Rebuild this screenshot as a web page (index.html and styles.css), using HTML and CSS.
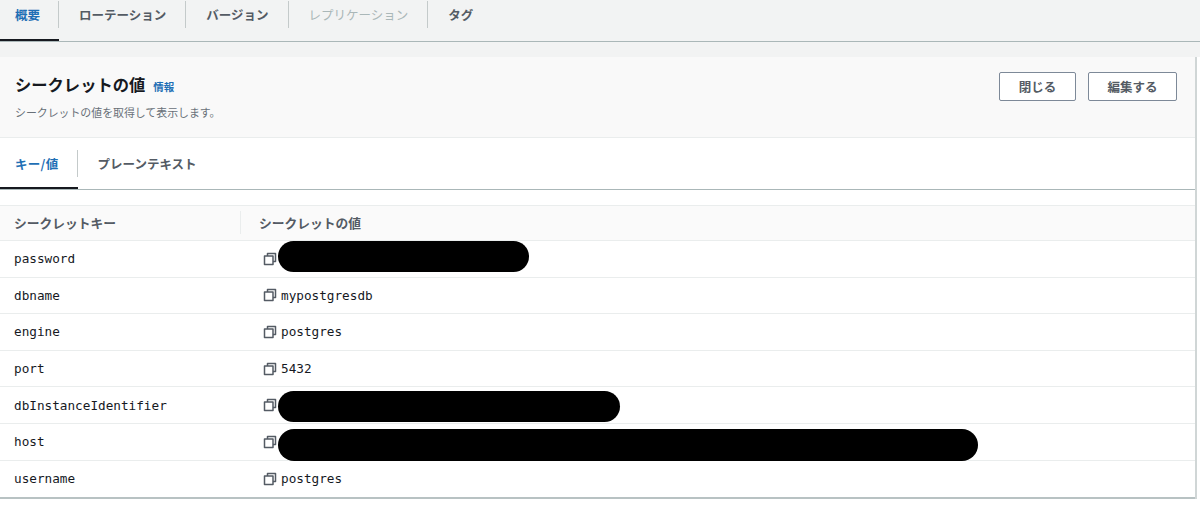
FILE: index.html
```html
<!DOCTYPE html>
<html lang="ja">
<head>
<meta charset="utf-8">
<title>シークレットの値</title>
<link rel="stylesheet" href="styles.css">
</head>
<body>
<svg class="defs" width="0" height="0" aria-hidden="true"><symbol id="copy" viewBox="0 0 14 14"><path d="M4.5 3.5V1.5H12.5V9.5H10.5M1.5 4H10V12.5H1.5Z" fill="none" stroke="currentColor" stroke-width="1.5" stroke-linejoin="round"/></symbol></svg>
<div class="top">
<nav class="tabs page-tabs">
  <a class="tab active">概要</a>
  <a class="tab">ローテーション</a>
  <a class="tab">バージョン</a>
  <a class="tab disabled">レプリケーション</a>
  <a class="tab">タグ</a>
</nav>
</div>
<main class="card">
  <header class="card-head">
    <div class="head-text">
      <h2 class="title">シークレットの値<span class="info">情報</span></h2>
      <p class="desc">シークレットの値を取得して表示します。</p>
    </div>
    <div class="actions">
      <button class="btn btn-close">閉じる</button>
      <button class="btn btn-edit">編集する</button>
    </div>
  </header>
  <nav class="tabs inner-tabs">
    <a class="tab active">キー/値</a>
    <a class="tab">プレーンテキスト</a>
  </nav>
  <div class="table">
    <div class="row head"><div class="key">シークレットキー</div><div class="val">シークレットの値</div></div>
    <div class="row"><div class="key">password</div><div class="val"><svg class="copy"><use href="#copy"/></svg><span class="mask mask-a"></span></div></div>
    <div class="row"><div class="key">dbname</div><div class="val"><svg class="copy"><use href="#copy"/></svg>mypostgresdb</div></div>
    <div class="row"><div class="key">engine</div><div class="val"><svg class="copy"><use href="#copy"/></svg>postgres</div></div>
    <div class="row"><div class="key">port</div><div class="val"><svg class="copy"><use href="#copy"/></svg>5432</div></div>
    <div class="row"><div class="key">dbInstanceIdentifier</div><div class="val"><svg class="copy"><use href="#copy"/></svg><span class="mask mask-b"></span></div></div>
    <div class="row"><div class="key">host</div><div class="val"><svg class="copy"><use href="#copy"/></svg><span class="mask mask-c"></span></div></div>
    <div class="row last"><div class="key">username</div><div class="val"><svg class="copy"><use href="#copy"/></svg>postgres</div></div>
  </div>
</main>
</body>
</html>
```
FILE: styles.css
```css
* { box-sizing: border-box; }
html, body { margin: 0; height: 511px; overflow: hidden; }
body {
  background: #fff;
  color: #16191f;
  font-family: "Noto Sans CJK JP", "Liberation Sans", sans-serif;
}
.defs { position: absolute; }
.top { height: 57px; background: #f2f3f3; }
.tabs { display: flex; border-bottom: 1px solid #aab7b8; }
.page-tabs { height: 42px; padding-top: 1px; }
.tab {
  display: flex;
  align-items: center;
  height: 27px;
  padding: 0 18px 0 15px;
  margin-bottom: 12px;
  border-right: 1px solid #c4caca;
  font-size: 12.5px;
  font-weight: 700;
  color: #545b64;
  white-space: nowrap;
  position: relative;
}
.tab:last-child { border-right: 0; }
.tab + .tab { padding-left: 20px; padding-right: 19px; }
.tab.disabled { color: #aab7b8; font-weight: 400; }
.tab.active { color: #1f6fb5; }
.tab.active::after {
  content: "";
  position: absolute;
  left: 0;
  right: -1px;
  bottom: -13px;
  height: 2px;
  background: #16191f;
}
.card {
  width: 1197px;
  background: #fff;
  border-right: 2px solid #d0d6d6;
}
.card-head {
  display: flex;
  justify-content: space-between;
  height: 81px;
  padding: 15px 18px 0 15px;
  background: #f9f9f9;
  border-bottom: 1px solid #eaeded;
}
.title {
  margin: 0;
  font-size: 16.3px;
  line-height: 24px;
  font-weight: 700;
  color: #16191f;
}
.info {
  margin-left: 8px;
  font-size: 10.5px;
  color: #1f6fb5;
}
.desc {
  margin: 5px 0 0;
  font-size: 10.9px;
  line-height: 16px;
  color: #687078;
}
.actions { display: flex; gap: 12px; }
.btn {
  height: 29px;
  border: 1px solid #7d8998;
  border-radius: 2px;
  background: #fff;
  color: #545b64;
  font: 700 12.5px "Noto Sans CJK JP", sans-serif;
}
.btn-close { width: 77px; }
.btn-edit { width: 89px; }
.inner-tabs { height: 52px; padding-top: 12px; background: #fff; }
.inner-tabs .tab { margin-bottom: 12px; padding-left: 15px; padding-right: 18px; letter-spacing: 0.3px; }
.inner-tabs .tab + .tab { padding-left: 20px; letter-spacing: 0; }
.inner-tabs .tab.active::after { bottom: -12px; }
.table { margin-top: 15px; border-top: 1px solid #eaeded; border-bottom: 2px solid #b8c2c3; width: 100%; }
.row {
  display: flex;
  align-items: center;
  height: 36.6px;
  border-bottom: 1px solid #eaeded;
  font: 12.7px "DejaVu Sans Mono", monospace;
  color: #16191f;
}
.row.last { border-bottom: 0; }
.row.head {
  height: 35px;
  background: #fafafa;
  font: 700 12.75px "Noto Sans CJK JP", sans-serif;
  color: #545b64;
  padding-bottom: 2px;
}
.key { width: 240px; padding-left: 14px; }
.val { position: relative; display: flex; align-items: center; padding-left: 23px; flex: 1; color: #16191f; }
.row.head .val { padding-left: 19px; color: #545b64; }
.row.head .val::before {
  content: "";
  position: absolute;
  left: 0;
  top: -2px;
  bottom: -2px;
  width: 1px;
  background: #eaeded;
}
.copy { width: 14px; height: 14px; margin-right: 4px; color: #545b64; flex: none; }
.mask { position: absolute; left: 38px; background: #000; border-radius: 16px; }
.mask-a { width: 251px; height: 31px; top: -11px; }
.mask-b { width: 342px; height: 31px; top: -7px; }
.mask-c { width: 700px; height: 32px; top: -6px; }
```
